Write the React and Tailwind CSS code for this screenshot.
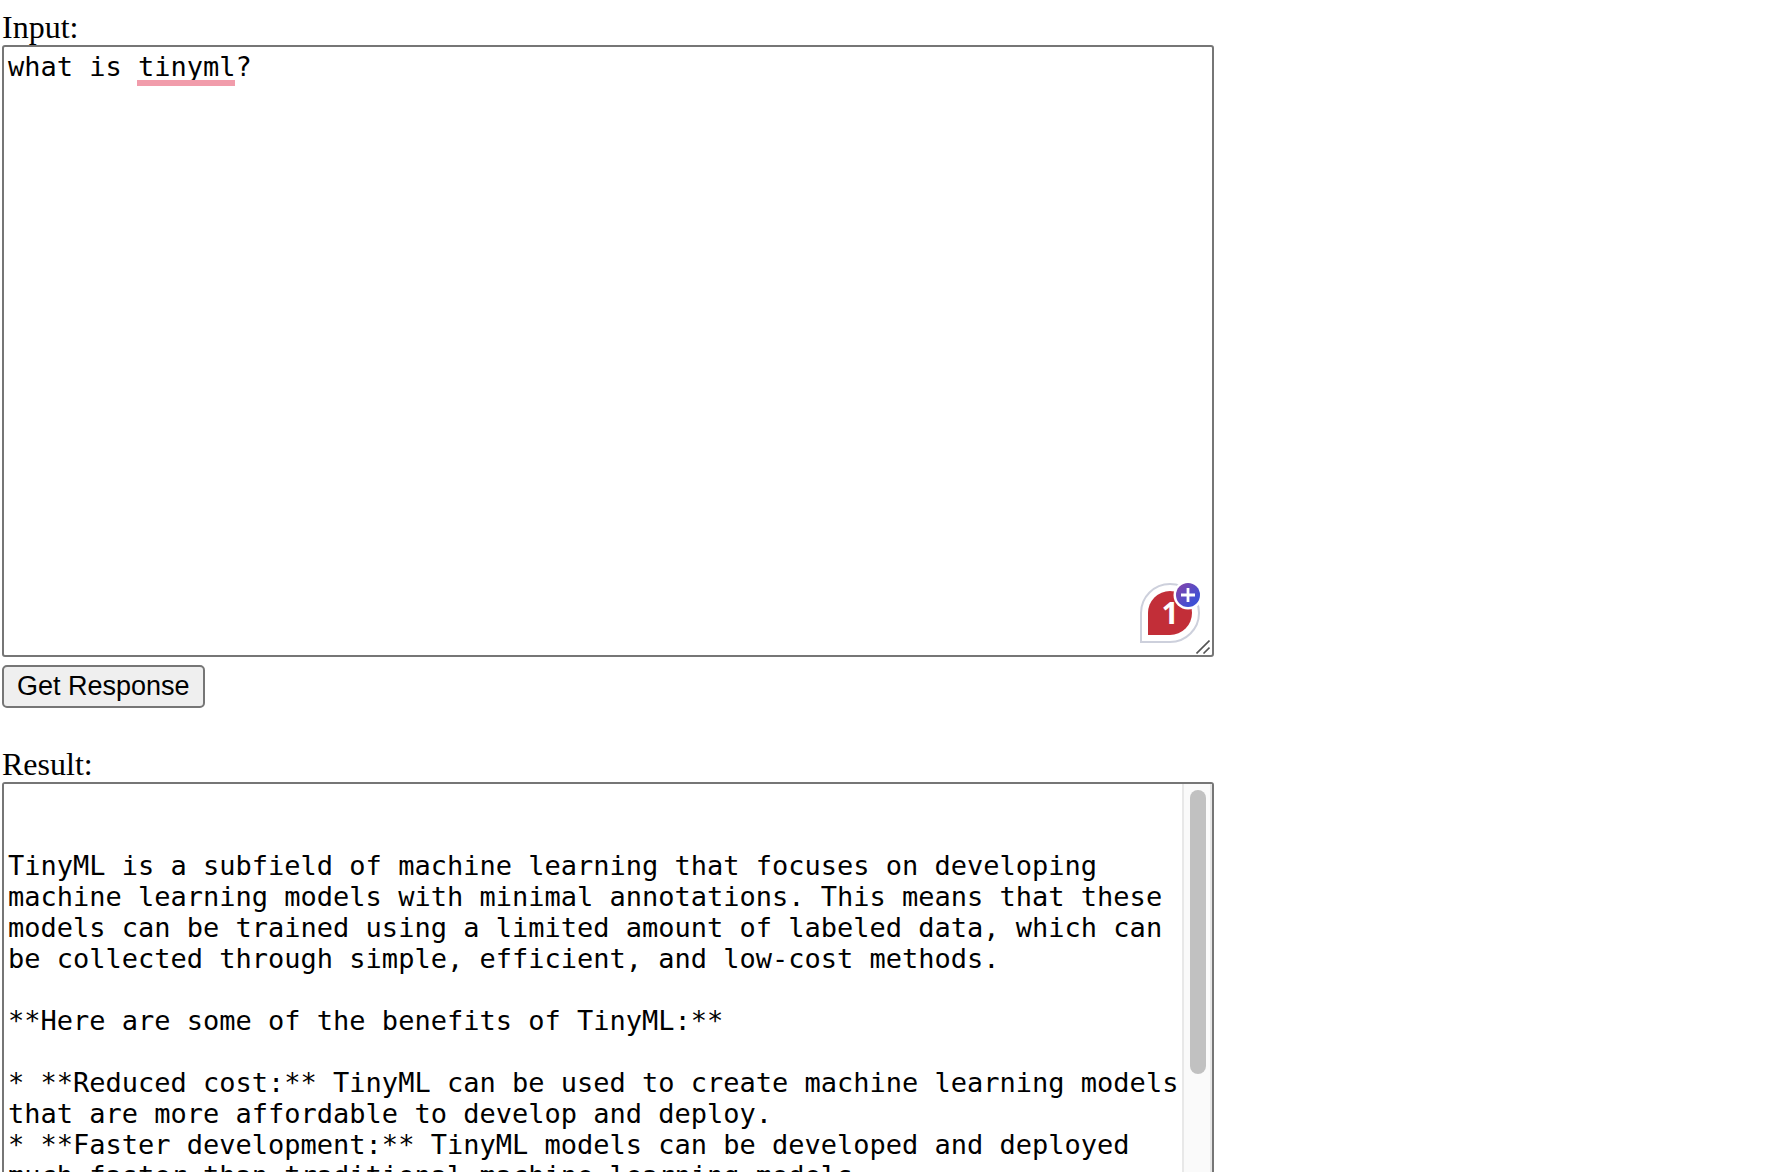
import { useState } from "react";

const RESULT = `

TinyML is a subfield of machine learning that focuses on developing machine learning models with minimal annotations. This means that these models can be trained using a limited amount of labeled data, which can be collected through simple, efficient, and low-cost methods.

**Here are some of the benefits of TinyML:**

* **Reduced cost:** TinyML can be used to create machine learning models that are more affordable to develop and deploy.
* **Faster development:** TinyML models can be developed and deployed much faster than traditional machine learning models.
`;

const labelStyle =
  "font-['Liberation_Serif',serif] text-[32px] leading-[36px]";
const fieldStyle =
  "h-[612px] w-full resize-none overflow-hidden rounded-[3px] border-2 border-[#767676] bg-white py-1 pl-1 font-['DejaVu_Sans_Mono',monospace] text-[27px] leading-[31px] outline-none";

function CheckerBadge() {
  return (
    <div className="absolute right-3.5 bottom-3.5 size-[60px] rounded-full rounded-bl-none border-2 border-[#cdd0dc] bg-white p-1.5">
      <div className="flex size-11 items-center justify-center rounded-full rounded-bl-none bg-[#c22e38] font-['Open_Sans',sans-serif] text-[30px] leading-none font-bold text-white">
        1
      </div>
      <svg
        className="absolute -top-[5px] -right-[5px] size-[30px]"
        viewBox="0 0 30 30"
        aria-hidden="true"
      >
        <defs>
          <linearGradient id="plus-fill" x1="0" y1="0" x2="1" y2="1">
            <stop offset="0.1" stopColor="#8045ad" />
            <stop offset="0.75" stopColor="#4050d4" />
          </linearGradient>
        </defs>
        <circle cx="15" cy="15" r="14.5" fill="#fff" />
        <circle cx="15" cy="15" r="12" fill="url(#plus-fill)" />
        <path d="M15 8v14M8 15h14" stroke="#fff" strokeWidth="2.8" />
      </svg>
    </div>
  );
}

function ResizeGrip() {
  return (
    <svg
      className="absolute right-1 bottom-[3px] size-3.5"
      viewBox="0 0 14 14"
      fill="none"
      stroke="#555"
      strokeWidth="1.6"
      aria-hidden="true"
    >
      <path d="M0.5 13.5L13.5 0.5M7.5 13.5L13.5 7.5" />
    </svg>
  );
}

export default function App() {
  const [prompt, setPrompt] = useState("what is tinyml?");

  return (
    <main className="h-screen overflow-hidden bg-white px-0.5 pt-[9px] text-black">
      <div className="flex max-w-[1212px] flex-col gap-[38px]">
        <section className="flex flex-col items-start gap-2">
          <div className="flex w-full flex-col">
            <label htmlFor="prompt" className={labelStyle}>
              Input:
            </label>
            <div className="relative flex">
              <textarea
                id="prompt"
                spellCheck={false}
                className={`${fieldStyle} pr-1`}
                value={prompt}
                onChange={(e) => setPrompt(e.target.value)}
              />
              <span className="pointer-events-none absolute top-[35px] left-[135px] h-1.5 w-[98px] bg-[#f19cab]" />
              <CheckerBadge />
              <ResizeGrip />
            </div>
          </div>
          <button
            type="button"
            className="flex h-[43px] items-center rounded-[5px] border-2 border-[#767676] bg-[#efefef] px-[13px] font-['Liberation_Sans',sans-serif] text-[27px] leading-[31px]"
          >
            Get Response
          </button>
        </section>
        <section className="flex flex-col">
          <label htmlFor="result" className={labelStyle}>
            Result:
          </label>
          <div className="flex overflow-hidden rounded-[3px] border-2 border-[#767676]">
            <textarea
              id="result"
              readOnly
              spellCheck={false}
              className="h-[608px] min-w-0 flex-1 resize-none overflow-hidden bg-white py-1 pl-1 font-['DejaVu_Sans_Mono',monospace] text-[27px] leading-[31px] outline-none"
              value={RESULT}
            />
            <div className="w-[30px] border-x-2 border-x-[#e8e8e8] bg-[#fafafa] pt-1.5 pr-1 pl-1.5">
              <div className="h-[284px] rounded-full bg-[#c1c1c1]" />
            </div>
          </div>
        </section>
      </div>
    </main>
  );
}
